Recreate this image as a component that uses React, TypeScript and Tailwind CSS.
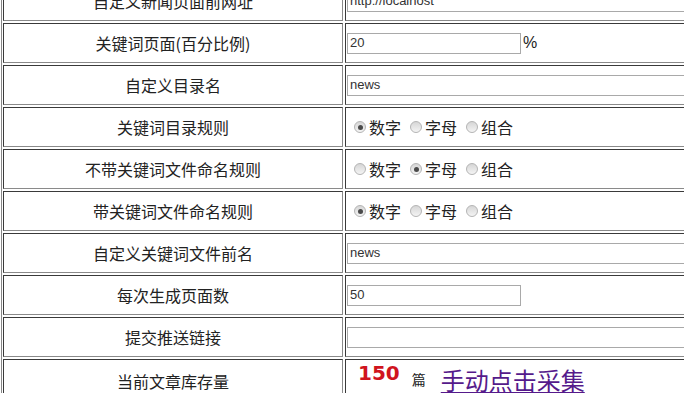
import type { ReactNode } from 'react';

const CELL =
  'border border-t-[#3a3a3a] border-l-[#3a3a3a] border-b-[#8a8a8a] border-r-[#8a8a8a] bg-white';

const FONT = {
  fontFamily: '"Noto Sans CJK SC", "Liberation Sans", sans-serif',
};

function Row({
  label,
  children,
  tall,
}: {
  label: string;
  children: ReactNode;
  tall?: boolean;
}) {
  return (
    <div className={`flex gap-[2px] ${tall ? 'h-[44px]' : 'h-[40px]'}`}>
      <div
        className={`${CELL} w-[340px] flex items-center justify-center text-[16px] text-[#222]`}
      >
        {label}
      </div>
      <div className={`${CELL} flex-1 flex items-center pl-[1px]`}>
        {children}
      </div>
    </div>
  );
}

function TextBox({ value, wide }: { value: string; wide?: boolean }) {
  return (
    <div
      className={`h-[21px] border border-[#a9a9a9] bg-white px-[2px] flex items-center text-[13px] text-[#333] font-['Liberation_Sans',sans-serif] ${
        wide ? 'w-[560px]' : 'w-[174px]'
      }`}
    >
      {value}
    </div>
  );
}

function Radio({ checked }: { checked?: boolean }) {
  return (
    <span className="w-[12px] h-[12px] rounded-full border border-[#b4b4b4] bg-linear-to-b from-[#d6d6d6] to-[#f4f4f4] flex items-center justify-center">
      {checked && <span className="w-[5px] h-[5px] rounded-full bg-[#4a4a4a]" />}
    </span>
  );
}

const OPTIONS = ['数字', '字母', '组合'];

function RadioGroup({ selected }: { selected: number }) {
  return (
    <div className="flex items-center text-[16px] text-[#222]">
      {OPTIONS.map((opt, i) => (
        <div
          key={opt}
          className={`flex items-center gap-[3px] ${i === 0 ? 'ml-[7px]' : 'ml-[9px]'}`}
        >
          <Radio checked={i === selected} />
          <span>{opt}</span>
        </div>
      ))}
    </div>
  );
}

export default function App() {
  return (
    <div className="w-[684px] h-[393px] overflow-hidden bg-white" style={FONT}>
      <div className="-mt-[19px] ml-[1px] w-[1000px] border-l border-[#888] pl-[1px] flex flex-col gap-[2px]">
        <Row label="自定义新闻页面前网址">
          <TextBox value="http://localhost" wide />
        </Row>
        <Row label="关键词页面(百分比例)">
          <TextBox value="20" />
          <span className="ml-[2px] text-[16px] text-[#222] font-['Liberation_Sans',sans-serif]">
            %
          </span>
        </Row>
        <Row label="自定义目录名">
          <TextBox value="news" wide />
        </Row>
        <Row label="关键词目录规则">
          <RadioGroup selected={0} />
        </Row>
        <Row label="不带关键词文件命名规则">
          <RadioGroup selected={1} />
        </Row>
        <Row label="带关键词文件命名规则">
          <RadioGroup selected={0} />
        </Row>
        <Row label="自定义关键词文件前名">
          <TextBox value="news" wide />
        </Row>
        <Row label="每次生成页面数">
          <TextBox value="50" />
        </Row>
        <Row label="提交推送链接">
          <TextBox value="" wide />
        </Row>
        <Row label="当前文章库存量" tall>
          <div className="flex items-center mb-[3px]">
            <span className="ml-[11px] mb-[14px] text-[20px] font-bold text-[#d0141e] font-['DejaVu_Sans',sans-serif] leading-none">
              150
            </span>
            <span className="ml-[12px] text-[14px] text-[#222]">篇</span>
            <a
              href="#"
              className="ml-[15px] text-[24px] text-[#551a8b] underline underline-offset-2 leading-none"
            >
              手动点击采集
            </a>
          </div>
        </Row>
      </div>
    </div>
  );
}
